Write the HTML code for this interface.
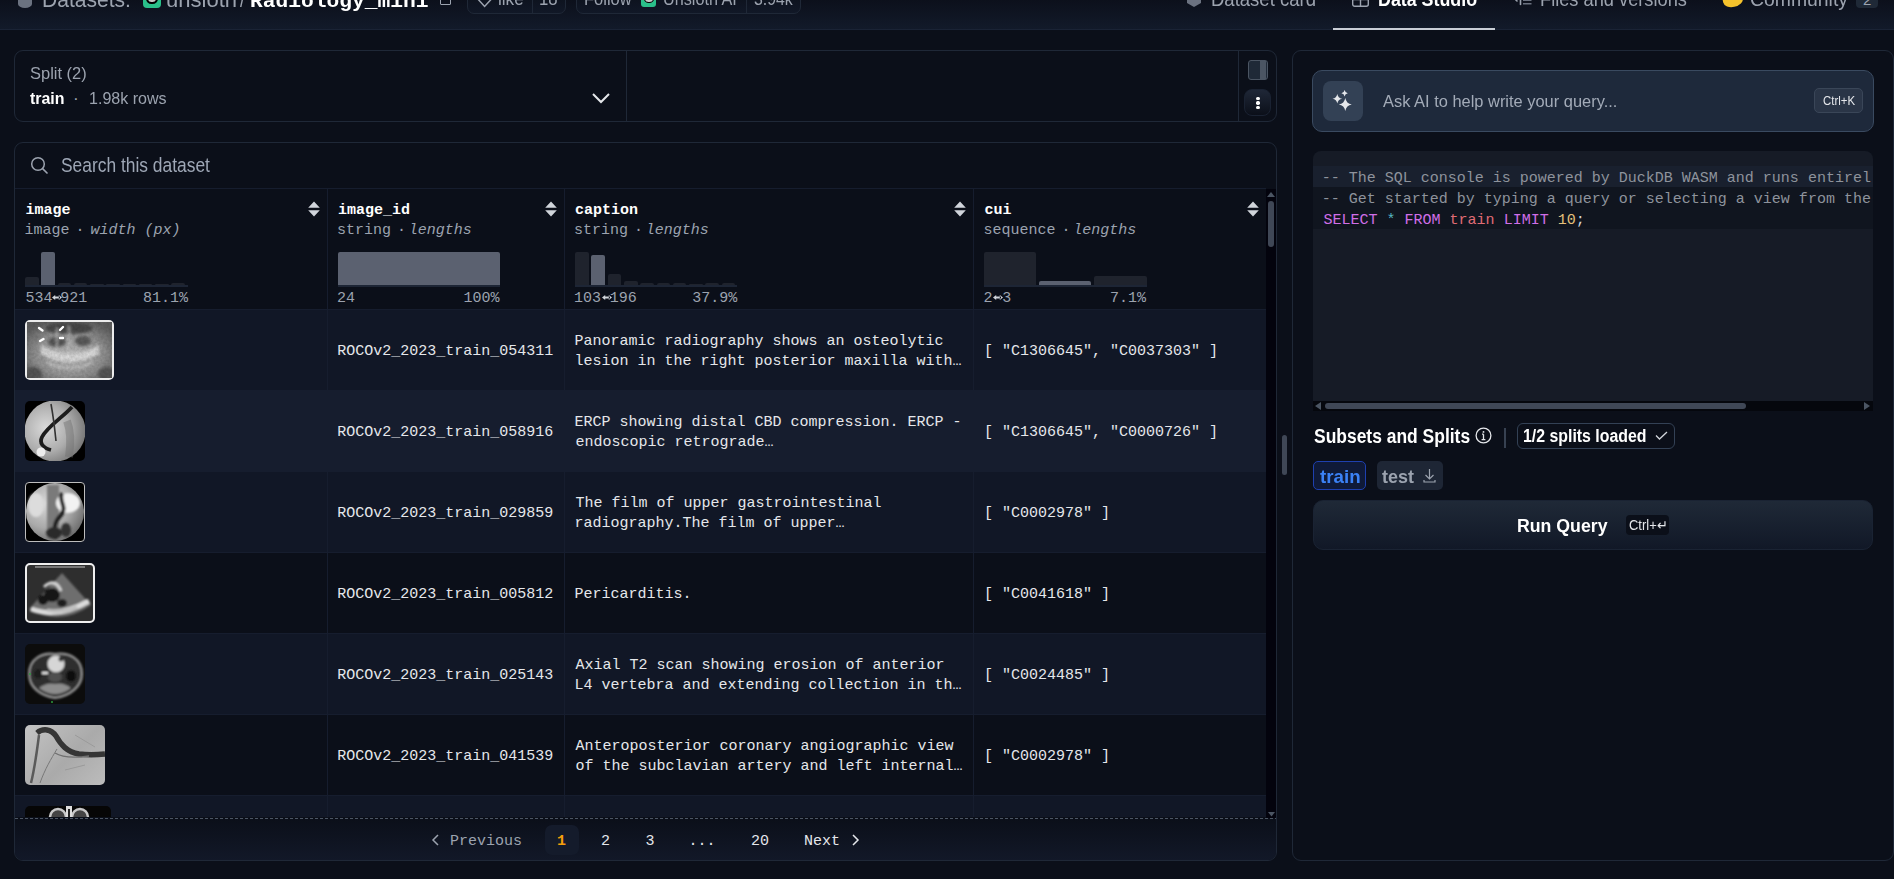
<!DOCTYPE html>
<html><head><meta charset="utf-8"><title>Radiology_mini</title>
<style>
*{box-sizing:border-box;margin:0;padding:0}
html,body{width:1894px;height:879px;overflow:hidden;background:#0b0f19;font-family:"Liberation Sans",sans-serif;color:#e5e7eb}
div,span,svg{position:absolute;display:block}
.tx{white-space:nowrap;transform-origin:0 0}
</style></head><body>
<div style="left:0px;top:0px;width:1894px;height:30px;background:linear-gradient(#0c101b,#121a2a);border-bottom:1px solid #1a2335"></div>
<div style="left:18px;top:-8px;width:14px;height:16px;background:#6b7280;border-radius:0 0 7px 7px/0 0 4px 4px"></div>
<div style="left:143px;top:-10px;width:18px;height:18px;background:#2ac08a;border-radius:4px"></div>
<div style="left:146px;top:-8px;width:12px;height:12px;background:#c8c8c8;border-radius:45%;border:2px solid #000"></div>
<div style="left:440px;top:-6px;width:11px;height:11px;border:1.3px solid #9ca3af;border-radius:1px"></div>
<div style="left:467px;top:-12px;width:99px;height:26px;border:1px solid #1f2837;border-radius:7px;background:linear-gradient(#0b0f19,#111827)"></div>
<div style="left:532px;top:-12px;width:1px;height:25px;background:#1f2837"></div>
<svg style="left:470px;top:-10px;" width="30" height="20" viewBox="0 0 30 20"><path d="M6 7 L14.6 16.4 L23.3 7" fill="none" stroke="#9ca3af" stroke-width="1.5"/></svg>
<div style="left:576px;top:-12px;width:225px;height:26px;border:1px solid #1f2837;border-radius:7px;background:linear-gradient(#0b0f19,#111827)"></div>
<div style="left:746px;top:-12px;width:1px;height:25px;background:#1f2837"></div>
<div style="left:641px;top:-6px;width:15px;height:13px;background:#2ac08a;border-radius:3px"></div>
<div style="left:643.5px;top:-6px;width:10px;height:9px;background:#c8c8c8;border-radius:45%;border:1.6px solid #000"></div>
<div style="left:1187px;top:-6px;width:14px;height:13px;background:#6b7280;border-radius:0 0 3px 3px;clip-path:polygon(0 0,100% 0,100% 70%,50% 100%,0 70%)"></div>
<svg style="left:1352px;top:-8px;" width="17" height="15" viewBox="0 0 17 15"><rect x="0.7" y="0.7" width="15.6" height="13.6" rx="2" fill="none" stroke="#9ca3af" stroke-width="1.4"/><path d="M0.7 7.5 H16.3 M8.5 7.5 V14.3" stroke="#9ca3af" stroke-width="1.4"/></svg>
<svg style="left:1513px;top:-8px;" width="20" height="14" viewBox="0 0 20 14"><path d="M7.5 0 V12.5" stroke="#9ca3af" stroke-width="1.6" stroke-linecap="round"/><path d="M10 8.3 H18.5 M10 11.8 H18.5 M10 4.8 H18.5" stroke="#6b7280" stroke-width="1.6"/><path d="M2 7 L4 9" stroke="#9ca3af" stroke-width="1.6" stroke-linecap="round"/></svg>
<div style="left:1333px;top:28px;width:162px;height:2px;background:#c9ced6"></div>
<div style="left:1723px;top:-6px;width:20px;height:13px;background:#f5c22c;border-radius:40% 50% 60% 60%;transform:rotate(-12deg)"></div>
<div style="left:1856px;top:-8px;width:22px;height:16px;background:#1f2937;border-radius:4px"></div>
<div style="left:14px;top:50px;width:1263px;height:72px;border:1px solid #1f2837;border-radius:9px"></div>
<div style="left:626px;top:51px;width:1px;height:70px;background:#1f2837"></div>
<div style="left:1238px;top:51px;width:1px;height:70px;background:#1f2837"></div>
<svg style="left:592px;top:93px;" width="18" height="11" viewBox="0 0 18 11"><path d="M1 1 L9 9 L17 1" fill="none" stroke="#e5e7eb" stroke-width="2"/></svg>
<div style="left:1248px;top:60px;width:20px;height:20px;border:1px solid #4b5563;border-radius:3px;background:linear-gradient(90deg,#1f2937 0,#1f2937 62%,#4b5563 62%,#4b5563 92%,#1f2937 92%)"></div>
<div style="left:1244px;top:89px;width:27px;height:27px;border:1px solid #1a2232;border-radius:8px;background:linear-gradient(#1f2737,#0b0f19)"></div>
<div style="left:1256.3px;top:97.0px;width:3.3px;height:3.3px;background:#fff;border-radius:50%"></div>
<div style="left:1256.3px;top:101.4px;width:3.3px;height:3.3px;background:#fff;border-radius:50%"></div>
<div style="left:1256.3px;top:105.7px;width:3.3px;height:3.3px;background:#fff;border-radius:50%"></div>
<div style="left:14px;top:142px;width:1263px;height:719px;border:1px solid #1f2837;border-radius:9px;background:#0b0f19;overflow:hidden"></div>
<div style="left:15px;top:818px;width:1261px;height:42px;background:linear-gradient(#0b0f19,#121828);border-radius:0 0 8px 8px"></div>
<svg style="left:30px;top:156px;" width="19" height="19" viewBox="0 0 19 19"><circle cx="8" cy="8" r="6.3" fill="none" stroke="#9ca3af" stroke-width="1.5"/><path d="M12.6 12.6 L17.5 17.5" stroke="#9ca3af" stroke-width="1.6"/></svg>
<div style="left:15px;top:188px;width:1251px;height:1px;background:#161d2e"></div>
<div style="left:15px;top:309px;width:1251px;height:81px;background:#111726"></div>
<div style="left:15px;top:309px;width:1251px;height:1px;background:#161d2e"></div>
<div style="left:15px;top:390px;width:1251px;height:81px;background:#161d2e"></div>
<div style="left:15px;top:390px;width:1251px;height:1px;background:#161d2e"></div>
<div style="left:15px;top:471px;width:1251px;height:81px;background:#111726"></div>
<div style="left:15px;top:471px;width:1251px;height:1px;background:#161d2e"></div>
<div style="left:15px;top:552px;width:1251px;height:81px;background:#0b0f19"></div>
<div style="left:15px;top:552px;width:1251px;height:1px;background:#161d2e"></div>
<div style="left:15px;top:633px;width:1251px;height:81px;background:#111726"></div>
<div style="left:15px;top:633px;width:1251px;height:1px;background:#161d2e"></div>
<div style="left:15px;top:714px;width:1251px;height:81px;background:#0b0f19"></div>
<div style="left:15px;top:714px;width:1251px;height:1px;background:#161d2e"></div>
<div style="left:15px;top:795px;width:1251px;height:22px;background:#111726"></div>
<div style="left:15px;top:795px;width:1251px;height:1px;background:#161d2e"></div>
<div style="left:327px;top:189px;width:1px;height:628px;background:#161d2e"></div>
<div style="left:564px;top:189px;width:1px;height:628px;background:#161d2e"></div>
<div style="left:973px;top:189px;width:1px;height:628px;background:#161d2e"></div>
<svg style="left:308px;top:201px;" width="12" height="16" viewBox="0 0 12 16"><path d="M6 0.5 L11.8 6.8 H0.2 Z M6 15.5 L11.8 9.2 H0.2 Z" fill="#d1d5db"/></svg>
<svg style="left:545px;top:201px;" width="12" height="16" viewBox="0 0 12 16"><path d="M6 0.5 L11.8 6.8 H0.2 Z M6 15.5 L11.8 9.2 H0.2 Z" fill="#d1d5db"/></svg>
<svg style="left:954px;top:201px;" width="12" height="16" viewBox="0 0 12 16"><path d="M6 0.5 L11.8 6.8 H0.2 Z M6 15.5 L11.8 9.2 H0.2 Z" fill="#d1d5db"/></svg>
<svg style="left:1247px;top:201px;" width="12" height="16" viewBox="0 0 12 16"><path d="M6 0.5 L11.8 6.8 H0.2 Z M6 15.5 L11.8 9.2 H0.2 Z" fill="#d1d5db"/></svg>
<div style="left:25px;top:285px;width:163px;height:2px;background:#1d2535"></div>
<div style="left:25.0px;top:277px;width:13.6px;height:8px;background:#1f232d;border-radius:2px 2px 0 0"></div>
<div style="left:41.25px;top:252px;width:13.6px;height:33px;background:#5b6170;border-radius:2px 2px 0 0"></div>
<div style="left:57.5px;top:283px;width:13.6px;height:2px;background:#1f232d;border-radius:2px 2px 0 0"></div>
<div style="left:73.75px;top:283px;width:13.6px;height:2px;background:#1f232d;border-radius:2px 2px 0 0"></div>
<div style="left:90.0px;top:284px;width:13.6px;height:1px;background:#1f232d;border-radius:2px 2px 0 0"></div>
<div style="left:106.25px;top:284px;width:13.6px;height:1px;background:#1f232d;border-radius:2px 2px 0 0"></div>
<div style="left:122.5px;top:284px;width:13.6px;height:1px;background:#1f232d;border-radius:2px 2px 0 0"></div>
<div style="left:138.75px;top:284px;width:13.6px;height:1px;background:#1f232d;border-radius:2px 2px 0 0"></div>
<div style="left:155.0px;top:284px;width:13.6px;height:1px;background:#1f232d;border-radius:2px 2px 0 0"></div>
<div style="left:171.25px;top:283px;width:13.6px;height:2px;background:#1f232d;border-radius:2px 2px 0 0"></div>
<div style="left:338px;top:285px;width:162px;height:2px;background:#1d2535"></div>
<div style="left:338px;top:252px;width:162px;height:33px;background:#5b6170;border-radius:2px 2px 0 0"></div>
<div style="left:575px;top:285px;width:162px;height:2px;background:#1d2535"></div>
<div style="left:575.0px;top:252px;width:13.7px;height:33px;background:#1f232d;border-radius:2px 2px 0 0"></div>
<div style="left:591.3px;top:255px;width:13.7px;height:30px;background:#5b6170;border-radius:2px 2px 0 0"></div>
<div style="left:607.6px;top:274px;width:13.7px;height:11px;background:#1f232d;border-radius:2px 2px 0 0"></div>
<div style="left:623.9px;top:281px;width:13.7px;height:4px;background:#1f232d;border-radius:2px 2px 0 0"></div>
<div style="left:640.2px;top:283px;width:13.7px;height:2px;background:#1f232d;border-radius:2px 2px 0 0"></div>
<div style="left:656.5px;top:283px;width:13.7px;height:2px;background:#1f232d;border-radius:2px 2px 0 0"></div>
<div style="left:672.8px;top:283px;width:13.7px;height:2px;background:#1f232d;border-radius:2px 2px 0 0"></div>
<div style="left:689.1px;top:284px;width:13.7px;height:1px;background:#1f232d;border-radius:2px 2px 0 0"></div>
<div style="left:705.4px;top:283px;width:13.7px;height:2px;background:#1f232d;border-radius:2px 2px 0 0"></div>
<div style="left:721.7px;top:283px;width:13.7px;height:2px;background:#1f232d;border-radius:2px 2px 0 0"></div>
<div style="left:984px;top:285px;width:163px;height:2px;background:#1d2535"></div>
<div style="left:984px;top:252px;width:52px;height:33px;background:#1f232d;border-radius:2px 2px 0 0"></div>
<div style="left:1039px;top:281px;width:52px;height:4px;background:#5b6170;border-radius:2px 2px 0 0"></div>
<div style="left:1094px;top:276px;width:53px;height:9px;background:#1f232d;border-radius:2px 2px 0 0"></div>
<div style="left:25px;top:320px;width:89px;height:60px;border:2px solid #ececec;border-radius:5px;overflow:hidden;background:#7a7a7a"></div>
<svg style="left:27px;top:322px;" width="85" height="56" viewBox="0 0 85 56"><defs><radialGradient id="g1" cx="50%" cy="58%" r="65%"><stop offset="0" stop-color="#bdbdbd"/><stop offset=".6" stop-color="#949494"/><stop offset="1" stop-color="#5e5e5e"/></radialGradient><filter id="bl1"><feGaussianBlur stdDeviation="1.5"/></filter><filter id="nz1" x="0" y="0" width="100%" height="100%"><feTurbulence type="fractalNoise" baseFrequency=".35" numOctaves="2" seed="3"/><feColorMatrix values="0 0 0 0 0  0 0 0 0 0  0 0 0 0 0  0 0 0 -1.2 1"/></filter></defs><rect width="85" height="56" fill="url(#g1)"/><g filter="url(#bl1)"><ellipse cx="42" cy="6" rx="24" ry="6" fill="#4a4a4a"/><ellipse cx="30" cy="20" rx="9" ry="5" fill="#555"/><ellipse cx="56" cy="19" rx="8" ry="5" fill="#5a5a5a"/><path d="M14 23 Q42 40 72 23 L72 32 Q42 48 14 32 Z" fill="#dcdcdc"/><path d="M20 40 Q42 52 66 40" stroke="#c2c2c2" stroke-width="3" fill="none"/><path d="M30 6 V30 M42 4 V32" stroke="#bdbdbd" stroke-width="1.5"/><ellipse cx="6" cy="52" rx="9" ry="7" fill="#555"/><ellipse cx="80" cy="52" rx="9" ry="7" fill="#555"/></g><rect width="85" height="56" filter="url(#nz1)" opacity=".16"/><path d="M12 6 l3.5 2.5 M36 5 l-3 3 M13 19 l3.5 -2 M36 16 h-3" stroke="#fff" stroke-width="2.4" stroke-linecap="round"/></svg>
<div style="left:25px;top:401px;width:60px;height:60px;border-radius:5px;background:#000;overflow:hidden"></div>
<svg style="left:25px;top:401px;" width="60" height="60" viewBox="0 0 60 60"><defs><radialGradient id="g2" cx="35%" cy="45%" r="65%"><stop offset="0" stop-color="#dadada"/><stop offset=".6" stop-color="#adadad"/><stop offset="1" stop-color="#7a7a7a"/></radialGradient><filter id="bl2"><feGaussianBlur stdDeviation=".5"/></filter></defs><circle cx="30" cy="30" r="30.5" fill="url(#g2)"/><g filter="url(#bl2)"><path d="M47 6 C38 16 22 26 17 36 C14 42 18 47 26 49" fill="none" stroke="#1c1c1c" stroke-width="3.8"/><path d="M26 3 C28 14 30 30 31 40" fill="none" stroke="#333" stroke-width="1.6"/><path d="M42 20 C46 30 46 42 44 56" stroke="#6e6e6e" stroke-width="8" opacity=".45" fill="none"/><circle cx="16" cy="51" r="4.5" fill="#ececec"/></g></svg>
<div style="left:25px;top:482px;width:60px;height:60px;border:1px solid #bdbdbd;border-radius:4px;background:#000;overflow:hidden"></div>
<svg style="left:26px;top:483px;" width="58" height="58" viewBox="0 0 58 58"><defs><radialGradient id="g3" cx="35%" cy="35%" r="70%"><stop offset="0" stop-color="#d8d8d8"/><stop offset=".6" stop-color="#aaaaaa"/><stop offset="1" stop-color="#707070"/></radialGradient><filter id="bl3"><feGaussianBlur stdDeviation="1.2"/></filter></defs><circle cx="29" cy="29" r="29" fill="url(#g3)"/><g filter="url(#bl3)"><rect x="21" y="2" width="12" height="54" fill="#7a7a7a"/><ellipse cx="42" cy="20" rx="12" ry="10" fill="#f2f2f2"/><ellipse cx="10" cy="22" rx="8" ry="12" fill="#dcdcdc"/><path d="M36 10 C32 18 42 24 35 32 C29 38 27 44 30 56" fill="none" stroke="#1a1a1a" stroke-width="4"/><ellipse cx="28" cy="50" rx="8" ry="6" fill="#2a2a2a"/><ellipse cx="40" cy="47" rx="5" ry="7" fill="#333"/></g></svg>
<div style="left:25px;top:563px;width:70px;height:60px;border:2px solid #efefef;border-radius:5px;background:#2e2e2e;overflow:hidden"></div>
<svg style="left:27px;top:565px;" width="66" height="56" viewBox="0 0 66 56"><defs><filter id="bl4"><feGaussianBlur stdDeviation=".9"/></filter></defs><g filter="url(#bl4)"><path d="M35 8 L2 44 Q33 62 64 40 Z" fill="#6e6e6e"/><ellipse cx="25" cy="30" rx="8" ry="7" fill="#141414"/><ellipse cx="16" cy="35" rx="5" ry="5" fill="#121212"/><ellipse cx="35" cy="38" rx="5" ry="4" fill="#1e1e1e"/><path d="M4 44 Q30 54 62 36" stroke="#dcdcdc" stroke-width="5" fill="none"/><path d="M17 22 Q28 12 34 26" stroke="#d4d4d4" stroke-width="3" fill="none"/><path d="M20 45 Q36 48 50 42" stroke="#bbb" stroke-width="3" fill="none"/></g><rect x="8" y="1" width="50" height="2" fill="#777"/></svg>
<div style="left:25px;top:644px;width:60px;height:60px;border-radius:5px;background:#0c0c0c;overflow:hidden"></div>
<svg style="left:25px;top:644px;" width="60" height="60" viewBox="0 0 60 60"><defs><filter id="bl5"><feGaussianBlur stdDeviation=".8"/></filter></defs><g filter="url(#bl5)"><path d="M4 30 C4 14 18 8 30 10 C44 8 57 14 57 30 C57 42 46 52 30 54 C16 52 4 44 4 30 Z" fill="#2e2e2e" stroke="#9a9a9a" stroke-width="2"/><circle cx="31" cy="20" r="8.5" fill="#d6d6d6"/><circle cx="36" cy="15" r="2.5" fill="#333"/><path d="M14 44 Q30 56 46 44 Q38 38 30 40 Q22 38 14 44 Z" fill="#8c8c8c"/><ellipse cx="46" cy="32" rx="5" ry="6" fill="#111"/><ellipse cx="13" cy="30" rx="4" ry="5" fill="#1a1a1a"/><rect x="17" y="28" width="6" height="2" fill="#eee"/><ellipse cx="30" cy="33" rx="7" ry="5" fill="#505050"/></g><circle cx="5" cy="30" r="1" fill="#2c9a3c"/><circle cx="27" cy="58" r="1" fill="#2c9a3c"/></svg>
<div style="left:25px;top:725px;width:80px;height:60px;border-radius:5px;background:linear-gradient(135deg,#c4c4c4,#aaaaaa 55%,#bcbcbc);overflow:hidden"></div>
<svg style="left:25px;top:725px;" width="80" height="60" viewBox="0 0 80 60"><defs><filter id="bl6"><feGaussianBlur stdDeviation=".7"/></filter></defs><g filter="url(#bl6)"><path d="M12 8 C18 3 26 4 31 11 C36 20 42 27 54 29 C62 30 70 30 80 29" fill="none" stroke="#353535" stroke-width="5.5"/><path d="M14 10 C12 26 10 42 6 58" fill="none" stroke="#5a5a5a" stroke-width="2.5"/><path d="M30 28 C38 33 50 33 64 31" fill="none" stroke="#707070" stroke-width="1.4"/><path d="M32 24 C26 34 20 44 15 58" fill="none" stroke="#787878" stroke-width="1"/><path d="M50 10 L70 22 M40 45 L60 40" stroke="#9a9a9a" stroke-width="1"/></g></svg>
<div style="left:25px;top:806px;width:86px;height:11px;border-radius:5px 5px 0 0;background:#060606;overflow:hidden"></div>
<svg style="left:25px;top:806px;" width="86" height="11" viewBox="0 0 86 11"><circle cx="33" cy="11" r="8" fill="#444" stroke="#c8c8c8" stroke-width="2.5"/><circle cx="55" cy="11" r="8" fill="#444" stroke="#c8c8c8" stroke-width="2.5"/><rect x="41" y="0" width="6" height="11" fill="#ddd"/><rect x="43" y="3" width="2" height="8" fill="#222"/></svg>
<div style="left:1266px;top:189px;width:10px;height:629px;background:#03030d"></div>
<div style="left:1268px;top:201px;width:6px;height:46px;background:#3f4756;border-radius:3px"></div>
<svg style="left:1267px;top:192px;" width="8" height="5" viewBox="0 0 8 5"><path d="M4 0 L8 5 H0 Z" fill="#4b5563"/></svg>
<svg style="left:1268px;top:812px;" width="7" height="4.5" viewBox="0 0 7 4.5"><path d="M3.5 4.5 L7 0 H0 Z" fill="#4b5563"/></svg>
<div style="left:15px;top:818px;width:1261px;height:1px;background:repeating-linear-gradient(90deg,#4b5563 0 3px,transparent 3px 5px)"></div>
<div style="left:545px;top:825px;width:34px;height:30px;background:#141b2b;border-radius:7px"></div>
<svg style="left:431px;top:834px;" width="9" height="12" viewBox="0 0 9 12"><path d="M7 1 L2 6 L7 11" fill="none" stroke="#9ca3af" stroke-width="1.5"/></svg>
<svg style="left:851px;top:834px;" width="9" height="12" viewBox="0 0 9 12"><path d="M2 1 L7 6 L2 11" fill="none" stroke="#e5e7eb" stroke-width="1.5"/></svg>
<svg style="left:52.1px;top:295px;" width="10" height="5" viewBox="0 0 10 5"><path d="M0 2.5 L3.2 0 V5 Z M10 2.5 L6.8 0 V5 Z M2 1.6 H8 V3.4 H2 Z" fill="#d1d5db"/></svg>
<svg style="left:601.5px;top:295px;" width="10" height="5" viewBox="0 0 10 5"><path d="M0 2.5 L3.2 0 V5 Z M10 2.5 L6.8 0 V5 Z M2 1.6 H8 V3.4 H2 Z" fill="#d1d5db"/></svg>
<svg style="left:993.0px;top:295px;" width="10" height="5" viewBox="0 0 10 5"><path d="M0 2.5 L3.2 0 V5 Z M10 2.5 L6.8 0 V5 Z M2 1.6 H8 V3.4 H2 Z" fill="#d1d5db"/></svg>
<div style="left:1292px;top:50px;width:602px;height:811px;border:1px solid #1f2837;border-radius:9px"></div>
<div style="left:1282px;top:435px;width:5px;height:40px;background:#3f4756;border-radius:3px"></div>
<div style="left:1312px;top:70px;width:562px;height:62px;background:#1e293b;border:1px solid #3a4a60;border-radius:10px"></div>
<div style="left:1323px;top:81px;width:40px;height:40px;background:#334155;border-radius:8px"></div>
<svg style="left:1323px;top:81px;" width="40" height="40" viewBox="0 0 40 40"><path d="M22.3 17.1 Q23.275000000000002 22.625 28.8 23.6 Q23.275000000000002 24.575000000000003 22.3 30.1 Q21.325 24.575000000000003 15.8 23.6 Q21.325 22.625 22.3 17.1 Z" fill="#e5e7eb"/><path d="M14.3 12.899999999999999 Q15.020000000000001 16.98 19.1 17.7 Q15.020000000000001 18.419999999999998 14.3 22.5 Q13.58 18.419999999999998 9.5 17.7 Q13.58 16.98 14.3 12.899999999999999 Z" fill="#e5e7eb"/><path d="M21.6 9.0 Q22.080000000000002 11.719999999999999 24.8 12.2 Q22.080000000000002 12.68 21.6 15.399999999999999 Q21.12 12.68 18.400000000000002 12.2 Q21.12 11.719999999999999 21.6 9.0 Z" fill="#e5e7eb"/></svg>
<div style="left:1814px;top:88px;width:49px;height:25px;background:#2a3547;border:1px solid #3a4658;border-radius:5px"></div>
<div style="left:1313px;top:151px;width:560px;height:250px;background:#161b26;border-radius:8px 8px 0 0"></div>
<div style="left:1313px;top:166px;width:560px;height:21px;background:#19202e"></div>
<div style="left:1313px;top:187px;width:560px;height:42px;background:#10151f"></div>
<div style="left:1313px;top:401px;width:560px;height:10px;background:#05070d"></div>
<div style="left:1325px;top:403px;width:421px;height:6px;background:#3f4756;border-radius:3px"></div>
<svg style="left:1315px;top:402px;" width="6" height="8" viewBox="0 0 6 8"><path d="M0 4 L6 0 V8 Z" fill="#4b5563"/></svg>
<svg style="left:1864px;top:402px;" width="6" height="8" viewBox="0 0 6 8"><path d="M6 4 L0 0 V8 Z" fill="#4b5563"/></svg>
<svg style="left:1475px;top:427px;" width="17" height="17" viewBox="0 0 17 17"><circle cx="8.5" cy="8.5" r="7.4" fill="none" stroke="#e5e7eb" stroke-width="1.3"/><path d="M8.5 7.2 V12.6 M6.6 12.6 H10.4 M7 7.2 H8.5" stroke="#e5e7eb" stroke-width="1.3" fill="none"/><circle cx="8.5" cy="4.9" r="0.95" fill="#e5e7eb"/></svg>
<div style="left:1504px;top:428px;width:2px;height:20px;background:#374151"></div>
<div style="left:1517px;top:423px;width:158px;height:26px;border:1px solid #334155;border-radius:6px;background:#0b0f19"></div>
<svg style="left:1655px;top:431px;" width="13" height="9" viewBox="0 0 13 9"><path d="M1 4.5 L4.5 8 L12 1" fill="none" stroke="#d1d5db" stroke-width="1.3"/></svg>
<div style="left:1313px;top:461px;width:53px;height:29px;background:#0f1a38;border:1px solid #1e40af;border-radius:5px"></div>
<div style="left:1377px;top:461px;width:66px;height:29px;background:#1e2635;border-radius:5px"></div>
<svg style="left:1423px;top:468px;" width="13" height="15" viewBox="0 0 13 15"><path d="M6.5 1 V11 M2.5 7 L6.5 11 L10.5 7 M1 12 V14 H12 V12" fill="none" stroke="#9ca3af" stroke-width="1.2"/></svg>
<div style="left:1313px;top:500px;width:560px;height:50px;background:linear-gradient(#1f2937,#111827);border:1px solid #1a2333;border-radius:10px"></div>
<div style="left:1626px;top:515px;width:43px;height:20px;background:#0b0f19;border-radius:4px"></div>

<span class="tx" style='left:42.02px;top:-12.46px;font:400 21.5px/1.1172 "Liberation Sans",sans-serif;color:#9ca3af;transform:scaleX(0.9792)'>Datasets:</span>
<span class="tx" style='left:165.98px;top:-12.46px;font:400 21.5px/1.1172 "Liberation Sans",sans-serif;color:#9ca3af;transform:scaleX(1.0242)'>unsloth</span>
<span class="tx" style='left:240.00px;top:-12.46px;font:400 21.5px/1.1172 "Liberation Sans",sans-serif;color:#9ca3af;transform:scaleX(0.8333)'>/</span>
<span class="tx" style='left:249.99px;top:-9.88px;font:700 21px/1.1328 "Liberation Mono",monospace;color:#ffffff;transform:scaleX(1.0124)'>Radiology_mini</span>
<span class="tx" style='left:498.02px;top:-10.34px;font:400 17.5px/1.1172 "Liberation Sans",sans-serif;color:#9ca3af;transform:scaleX(0.9786)'>like</span>
<span class="tx" style='left:539.04px;top:-10.34px;font:400 17.5px/1.1172 "Liberation Sans",sans-serif;color:#9ca3af;transform:scaleX(0.9587)'>18</span>
<span class="tx" style='left:584.06px;top:-10.34px;font:400 17.5px/1.1172 "Liberation Sans",sans-serif;color:#9ca3af;transform:scaleX(0.9413)'>Follow</span>
<span class="tx" style='left:663.07px;top:-10.34px;font:400 17.5px/1.1172 "Liberation Sans",sans-serif;color:#9ca3af;transform:scaleX(0.9256)'>Unsloth AI</span>
<span class="tx" style='left:754.00px;top:-10.34px;font:400 17.5px/1.1172 "Liberation Sans",sans-serif;color:#9ca3af;transform:scaleX(0.9057)'>3.94k</span>
<span class="tx" style='left:1211.07px;top:-12.11px;font:400 20px/1.1172 "Liberation Sans",sans-serif;color:#9ca3af;transform:scaleX(0.9257)'>Dataset card</span>
<span class="tx" style='left:1378.11px;top:-12.11px;font:700 20px/1.1172 "Liberation Sans",sans-serif;color:#ffffff;transform:scaleX(0.8917)'>Data Studio</span>
<span class="tx" style='left:1540.09px;top:-12.11px;font:400 20px/1.1172 "Liberation Sans",sans-serif;color:#9ca3af;transform:scaleX(0.9115)'>Files and versions</span>
<span class="tx" style='left:1750.03px;top:-12.11px;font:400 20px/1.1172 "Liberation Sans",sans-serif;color:#9ca3af;transform:scaleX(0.9687)'>Community</span>
<span class="tx" style='left:1863.00px;top:-7.58px;font:400 15px/1.1172 "Liberation Sans",sans-serif;color:#9ca3af'>2</span>
<span class="tx" style='left:30.00px;top:63.94px;font:400 17.3px/1.1172 "Liberation Sans",sans-serif;color:#9ca3af;transform:scaleX(0.9526)'>Split (2)</span>
<span class="tx" style='left:30.00px;top:88.94px;font:700 17.3px/1.1172 "Liberation Sans",sans-serif;color:#ffffff;transform:scaleX(0.9216)'>train</span>
<span class="tx" style='left:73.00px;top:88.94px;font:400 17.3px/1.1172 "Liberation Sans",sans-serif;color:#9ca3af'>·</span>
<span class="tx" style='left:89.07px;top:88.94px;font:400 17.3px/1.1172 "Liberation Sans",sans-serif;color:#9ca3af;transform:scaleX(0.9286)'>1.98k rows</span>
<span class="tx" style='left:60.50px;top:154.73px;font:400 19.3px/1.1172 "Liberation Sans",sans-serif;color:#9ea7b6;transform:scaleX(0.9022)'>Search this dataset</span>
<span class="tx" style='left:25.60px;top:202.11px;font:700 15px/1.1328 "Liberation Mono",monospace;color:#ffffff'>image</span>
<span class="tx" style='left:24.60px;top:222.11px;font:400 15px/1.1328 "Liberation Mono",monospace;color:#9ca3af'>image</span>
<span class="tx" style='left:75.60px;top:222.11px;font:400 15px/1.1328 "Liberation Mono",monospace;color:#9ca3af'>·</span>
<span class="tx" style='left:90.40px;top:222.11px;font:italic 400 15px/1.1328 "Liberation Mono",monospace;color:#9ca3af'>width (px)</span>
<span class="tx" style='left:25.60px;top:290.11px;font:400 15px/1.1328 "Liberation Mono",monospace;color:#9ca3af'>534</span>
<span class="tx" style='left:60.30px;top:290.11px;font:400 15px/1.1328 "Liberation Mono",monospace;color:#9ca3af'>921</span>
<span class="tx" style='left:143.10px;top:290.11px;font:400 15px/1.1328 "Liberation Mono",monospace;color:#9ca3af'>81.1%</span>
<span class="tx" style='left:338.00px;top:202.11px;font:700 15px/1.1328 "Liberation Mono",monospace;color:#ffffff'>image_id</span>
<span class="tx" style='left:337.00px;top:222.11px;font:400 15px/1.1328 "Liberation Mono",monospace;color:#9ca3af'>string</span>
<span class="tx" style='left:397.00px;top:222.11px;font:400 15px/1.1328 "Liberation Mono",monospace;color:#9ca3af'>·</span>
<span class="tx" style='left:408.80px;top:222.11px;font:italic 400 15px/1.1328 "Liberation Mono",monospace;color:#9ca3af'>lengths</span>
<span class="tx" style='left:337.00px;top:290.11px;font:400 15px/1.1328 "Liberation Mono",monospace;color:#9ca3af'>24</span>
<span class="tx" style='left:463.60px;top:290.11px;font:400 15px/1.1328 "Liberation Mono",monospace;color:#9ca3af'>100%</span>
<span class="tx" style='left:575.00px;top:202.11px;font:700 15px/1.1328 "Liberation Mono",monospace;color:#ffffff'>caption</span>
<span class="tx" style='left:574.00px;top:222.11px;font:400 15px/1.1328 "Liberation Mono",monospace;color:#9ca3af'>string</span>
<span class="tx" style='left:634.00px;top:222.11px;font:400 15px/1.1328 "Liberation Mono",monospace;color:#9ca3af'>·</span>
<span class="tx" style='left:645.80px;top:222.11px;font:italic 400 15px/1.1328 "Liberation Mono",monospace;color:#9ca3af'>lengths</span>
<span class="tx" style='left:574.00px;top:290.11px;font:400 15px/1.1328 "Liberation Mono",monospace;color:#9ca3af'>103</span>
<span class="tx" style='left:609.70px;top:290.11px;font:400 15px/1.1328 "Liberation Mono",monospace;color:#9ca3af'>196</span>
<span class="tx" style='left:692.30px;top:290.11px;font:400 15px/1.1328 "Liberation Mono",monospace;color:#9ca3af'>37.9%</span>
<span class="tx" style='left:984.50px;top:202.11px;font:700 15px/1.1328 "Liberation Mono",monospace;color:#ffffff'>cui</span>
<span class="tx" style='left:983.50px;top:222.11px;font:400 15px/1.1328 "Liberation Mono",monospace;color:#9ca3af'>sequence</span>
<span class="tx" style='left:1061.50px;top:222.11px;font:400 15px/1.1328 "Liberation Mono",monospace;color:#9ca3af'>·</span>
<span class="tx" style='left:1073.30px;top:222.11px;font:italic 400 15px/1.1328 "Liberation Mono",monospace;color:#9ca3af'>lengths</span>
<span class="tx" style='left:983.50px;top:290.11px;font:400 15px/1.1328 "Liberation Mono",monospace;color:#9ca3af'>2</span>
<span class="tx" style='left:1002.20px;top:290.11px;font:400 15px/1.1328 "Liberation Mono",monospace;color:#9ca3af'>3</span>
<span class="tx" style='left:1110.10px;top:290.11px;font:400 15px/1.1328 "Liberation Mono",monospace;color:#9ca3af'>7.1%</span>
<span class="tx" style='left:337.20px;top:342.61px;font:400 15px/1.1328 "Liberation Mono",monospace;color:#e5e7eb'>ROCOv2_2023_train_054311</span>
<span class="tx" style='left:574.50px;top:333.11px;font:400 15px/1.1328 "Liberation Mono",monospace;color:#e5e7eb'>Panoramic radiography shows an osteolytic</span>
<span class="tx" style='left:574.50px;top:353.11px;font:400 15px/1.1328 "Liberation Mono",monospace;color:#e5e7eb'>lesion in the right posterior maxilla with…</span>
<span class="tx" style='left:984.00px;top:342.61px;font:400 15px/1.1328 "Liberation Mono",monospace;color:#e5e7eb'>[ &quot;C1306645&quot;, &quot;C0037303&quot; ]</span>
<span class="tx" style='left:337.20px;top:423.61px;font:400 15px/1.1328 "Liberation Mono",monospace;color:#e5e7eb'>ROCOv2_2023_train_058916</span>
<span class="tx" style='left:574.50px;top:414.11px;font:400 15px/1.1328 "Liberation Mono",monospace;color:#e5e7eb'>ERCP showing distal CBD compression. ERCP -</span>
<span class="tx" style='left:575.50px;top:434.11px;font:400 15px/1.1328 "Liberation Mono",monospace;color:#e5e7eb'>endoscopic retrograde…</span>
<span class="tx" style='left:984.00px;top:423.61px;font:400 15px/1.1328 "Liberation Mono",monospace;color:#e5e7eb'>[ &quot;C1306645&quot;, &quot;C0000726&quot; ]</span>
<span class="tx" style='left:337.20px;top:504.61px;font:400 15px/1.1328 "Liberation Mono",monospace;color:#e5e7eb'>ROCOv2_2023_train_029859</span>
<span class="tx" style='left:575.50px;top:495.11px;font:400 15px/1.1328 "Liberation Mono",monospace;color:#e5e7eb'>The film of upper gastrointestinal</span>
<span class="tx" style='left:574.50px;top:515.11px;font:400 15px/1.1328 "Liberation Mono",monospace;color:#e5e7eb'>radiography.The film of upper…</span>
<span class="tx" style='left:984.00px;top:504.61px;font:400 15px/1.1328 "Liberation Mono",monospace;color:#e5e7eb'>[ &quot;C0002978&quot; ]</span>
<span class="tx" style='left:337.20px;top:585.61px;font:400 15px/1.1328 "Liberation Mono",monospace;color:#e5e7eb'>ROCOv2_2023_train_005812</span>
<span class="tx" style='left:574.50px;top:585.61px;font:400 15px/1.1328 "Liberation Mono",monospace;color:#e5e7eb'>Pericarditis.</span>
<span class="tx" style='left:984.00px;top:585.61px;font:400 15px/1.1328 "Liberation Mono",monospace;color:#e5e7eb'>[ &quot;C0041618&quot; ]</span>
<span class="tx" style='left:337.20px;top:666.61px;font:400 15px/1.1328 "Liberation Mono",monospace;color:#e5e7eb'>ROCOv2_2023_train_025143</span>
<span class="tx" style='left:575.50px;top:657.11px;font:400 15px/1.1328 "Liberation Mono",monospace;color:#e5e7eb'>Axial T2 scan showing erosion of anterior</span>
<span class="tx" style='left:574.50px;top:677.11px;font:400 15px/1.1328 "Liberation Mono",monospace;color:#e5e7eb'>L4 vertebra and extending collection in th…</span>
<span class="tx" style='left:984.00px;top:666.61px;font:400 15px/1.1328 "Liberation Mono",monospace;color:#e5e7eb'>[ &quot;C0024485&quot; ]</span>
<span class="tx" style='left:337.20px;top:747.61px;font:400 15px/1.1328 "Liberation Mono",monospace;color:#e5e7eb'>ROCOv2_2023_train_041539</span>
<span class="tx" style='left:575.50px;top:738.11px;font:400 15px/1.1328 "Liberation Mono",monospace;color:#e5e7eb'>Anteroposterior coronary angiographic view</span>
<span class="tx" style='left:575.50px;top:758.11px;font:400 15px/1.1328 "Liberation Mono",monospace;color:#e5e7eb'>of the subclavian artery and left internal…</span>
<span class="tx" style='left:984.00px;top:747.61px;font:400 15px/1.1328 "Liberation Mono",monospace;color:#e5e7eb'>[ &quot;C0002978&quot; ]</span>
<span class="tx" style='left:450.00px;top:833.01px;font:400 15px/1.1328 "Liberation Mono",monospace;color:#9ca3af'>Previous</span>
<span class="tx" style='left:557.00px;top:833.01px;font:700 15px/1.1328 "Liberation Mono",monospace;color:#f59e0b'>1</span>
<span class="tx" style='left:601.00px;top:833.01px;font:400 15px/1.1328 "Liberation Mono",monospace;color:#e5e7eb'>2</span>
<span class="tx" style='left:645.50px;top:833.01px;font:400 15px/1.1328 "Liberation Mono",monospace;color:#e5e7eb'>3</span>
<span class="tx" style='left:688.50px;top:833.01px;font:400 15px/1.1328 "Liberation Mono",monospace;color:#e5e7eb'>...</span>
<span class="tx" style='left:751.00px;top:833.01px;font:400 15px/1.1328 "Liberation Mono",monospace;color:#e5e7eb'>20</span>
<span class="tx" style='left:804.00px;top:833.01px;font:400 15px/1.1328 "Liberation Mono",monospace;color:#e5e7eb'>Next</span>
<span class="tx" style='left:1383.00px;top:92.14px;font:400 17.3px/1.1172 "Liberation Sans",sans-serif;color:#a3abb8;transform:scaleX(0.9506)'>Ask AI to help write your query...</span>
<span class="tx" style='left:1823.00px;top:93.28px;font:400 13.5px/1.1172 "Liberation Sans",sans-serif;color:#e5e7eb;transform:scaleX(0.8448)'>Ctrl+K</span>
<span class="tx" style='left:1321.80px;top:169.81px;font:400 15px/1.1328 "Liberation Mono",monospace;color:#8e939c'>-- The SQL console is powered by DuckDB WASM and runs entirel</span>
<span class="tx" style='left:1321.80px;top:190.61px;font:400 15px/1.1328 "Liberation Mono",monospace;color:#8e939c'>-- Get started by typing a query or selecting a view from the</span>
<span class="tx" style='left:1323.50px;top:211.81px;font:400 15px/1.1328 "Liberation Mono",monospace;color:#c678dd'><span style="position:static;display:inline;color:#d16ee8">SELECT</span> <span style="position:static;display:inline;color:#56b6c2">*</span> <span style="position:static;display:inline;color:#d16ee8">FROM</span> <span style="position:static;display:inline;color:#e06c75">train</span> <span style="position:static;display:inline;color:#d16ee8">LIMIT</span> <span style="position:static;display:inline;color:#e5c07b">10</span><span style="position:static;display:inline;color:#d1d5db">;</span></span>
<span class="tx" style='left:1314.00px;top:425.09px;font:700 20px/1.1172 "Liberation Sans",sans-serif;color:#ffffff;transform:scaleX(0.8725)'>Subsets and Splits</span>
<span class="tx" style='left:1523.09px;top:426.96px;font:700 17.5px/1.1172 "Liberation Sans",sans-serif;color:#ffffff;transform:scaleX(0.9073)'>1/2 splits loaded</span>
<span class="tx" style='left:1319.50px;top:466.00px;font:700 19px/1.1172 "Liberation Sans",sans-serif;color:#3b82f6;transform:scaleX(0.9860)'>train</span>
<span class="tx" style='left:1382.00px;top:466.00px;font:700 19px/1.1172 "Liberation Sans",sans-serif;color:#9ca3af;transform:scaleX(0.9431)'>test</span>
<span class="tx" style='left:1517.07px;top:515.30px;font:700 19px/1.1172 "Liberation Sans",sans-serif;color:#ffffff;transform:scaleX(0.9321)'>Run Query</span>
<span class="tx" style='left:1629.00px;top:517.93px;font:400 14px/1.1172 "Liberation Sans",sans-serif;color:#e5e7eb;transform:scaleX(0.9262)'>Ctrl+↵</span>
</body></html>
